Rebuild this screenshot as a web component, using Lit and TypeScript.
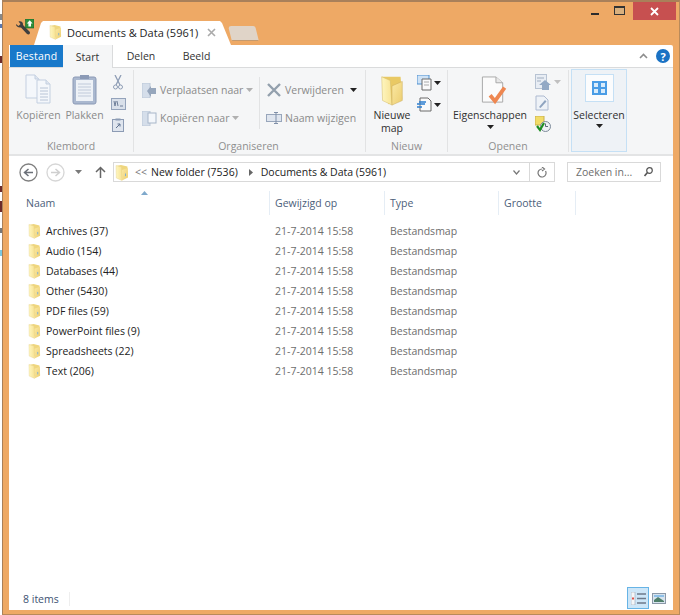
import { LitElement, css, html, svg } from 'lit';
import { customElement } from 'lit/decorators.js';

type Row = { name: string };

const rows: Row[] = [
  { name: 'Archives (37)' },
  { name: 'Audio (154)' },
  { name: 'Databases (44)' },
  { name: 'Other (5430)' },
  { name: 'PDF files (59)' },
  { name: 'PowerPoint files (9)' },
  { name: 'Spreadsheets (22)' },
  { name: 'Text (206)' },
];

// folder drawn in a 14x17 box, scaled by the caller
const folder = (w: number, h: number) => html`
  <svg class="ico" width=${w} height=${h} viewBox="0 0 14 17">
    <path d="M1 2 L6 1 L12.4 2.5 L12.8 13 L5 15 Z" fill="#efd67e"/>
    <path d="M1 1.5 L6.5 3 L7 16.5 L1.3 14 Z" fill="url(#fold)" stroke="#e6d28c" stroke-width=".4"/>
    <path d="M7 6 L12.8 4 L13 13.5 L7 16.5 Z" fill="url(#fold2)"/>
    <rect x="10" y="9.5" width="1" height="2.6" fill="#7fb0d2"/>
  </svg>`;

const caret = (c = '#222') => html`<svg class="ico" width="7" height="4" viewBox="0 0 7 4"><path d="M0 0 H7 L3.5 4 Z" fill=${c}/></svg>`;

const docs = svg`
  <path d="M1 1 H10 L14 5 V24 H1 Z" fill="#f4f7fb" stroke="#c3cfe0"/>
  <path d="M10 1 V5 H14" fill="#dfe6f0" stroke="#c3cfe0"/>`;

@customElement('app-root')
export class AppRoot extends LitElement {
  static styles = css`
    :host {
      display: block;
      width: 680px;
      height: 615px;
      overflow: hidden;
      font-family: "Open Sans", "Noto Sans", sans-serif;
      font-size: 10.5px;
      color: #1e1e1e;
      background: #fff;
    }
    .defs { position: absolute; width: 0; height: 0; }
    .ico { display: block; flex: none; }
    .desk {
      height: 615px;
      padding-left: 2px;
      box-sizing: border-box;
      /* bits of the desktop behind the window */
      background: linear-gradient(to bottom,
        #fff 0 14px, #888 14px 20px, #fff 20px 24px, #5a78b0 24px 28px, #fff 28px 56px,
        #6d2a2a 56px 63px, #fff 63px 186px, #6d2a2a 186px 192px, #fff 192px 201px,
        #6d2a2a 201px 212px, #fff 212px 228px, #777 228px 233px, #fff 233px 250px,
        #7cc8e0 250px 256px, #fff 256px);
    }
    .window {
      height: 615px;
      box-sizing: border-box;
      background: #eea965;
      border-left: 1px solid #a9805a;
      border-top: 2px solid #a9805a;
      border-right: 1px solid #b98a5a;
      border-bottom: 1px solid #b98a5a;
      padding: 0 6px 4px 6px;
      display: flex;
      flex-direction: column;
    }
    .titlebar {
      height: 43px;
      display: flex;
      align-items: flex-start;
      flex: none;
    }
    .app-ico { margin: 17px 0 0 6px; }
    .tab {
      margin-top: 19px;
      width: 197px;
      height: 24px;
      box-sizing: border-box;
      background: #fff;
      clip-path: polygon(0 100%, 7px 2px, 9px 0, 186px 0, 188px 2px, 197px 100%);
      display: flex;
      align-items: center;
      font-size: 11px;
      padding: 0 0 2px 15px;
      gap: 5px;
      white-space: nowrap;
    }
    .tab .x { margin-left: 4px; }
    .tab2 {
      margin: 24px 0 0 -1px;
      width: 27px;
      height: 14px;
      background: #e0d4c8;
      border-radius: 3px 2px 1px 1px;
      transform: skewX(14deg);
      border-bottom: 1px solid #c59a6e;
    }
    .winbtns {
      margin-left: auto;
      margin-right: -3px;
      display: flex;
      height: 18px;
    }
    .winbtn { width: 28px; display: flex; align-items: center; justify-content: center; }
    .winbtn.first { width: 20px; }
    .winbtn.close { width: 43px; background: #c75050; }
    .min { width: 8px; height: 2px; background: #2c2c2c; margin-top: 6px; }
    .max { width: 9px; height: 6px; border: 1px solid #333; border-top-width: 2px; background: #d9b07e; margin-top: -2px; }

    .content {
      flex: 1;
      background: #fff;
      display: flex;
      flex-direction: column;
      min-height: 0;
      border-top-right-radius: 2px;
    }
    .tabs {
      height: 23px;
      flex: none;
      display: flex;
      align-items: stretch;
      border-bottom: 1px solid #dadbdc;
      box-sizing: border-box;
    }
    .rtab { display: flex; align-items: center; justify-content: center; }
    .rtab.file { width: 53px; background: #1979ca; color: #fff; margin-left: 1px; letter-spacing: .2px; }
    .rtab.active { width: 49px; background: #f5f6f7; border-right: 1px solid #dadbdc; margin-bottom: -1px; color: #333; }
    .rtab.plain { width: 56px; color: #333; }
    .rtab.wide { width: 55px; }
    .tabs .right { margin-left: auto; display: flex; align-items: center; gap: 8px; padding-right: 3px; }
    .help {
      width: 14px; height: 14px; border-radius: 50%;
      background: #1a72c4; color: #fff; font-weight: 700; font-size: 11px;
      display: flex; align-items: center; justify-content: center;
    }

    .ribbon {
      height: 88px;
      flex: none;
      background: #f5f6f7;
      border-bottom: 2px solid #e3e4e5;
      display: flex;
      box-sizing: border-box;
      color: #8a8a8a;
    }
    .group {
      display: flex;
      flex-direction: column;
      align-items: stretch;
      box-sizing: border-box;
      padding-top: 2px;
    }
    .sep { width: 1px; background: #e2e3e4; margin: 2px 0; flex: none; }
    .sep.inner { margin: 7px 0 10px; }
    .g-body { height: 69px; display: flex; }
    .g-label { text-align: center; color: #8f8f8f; height: 15px; line-height: 14px; }
    .big {
      display: flex; flex-direction: column; align-items: center;
      line-height: 13px; text-align: center;
    }
    .col { display: flex; flex-direction: column; }
    .small { display: flex; align-items: center; gap: 3px; height: 28px; white-space: nowrap; }
    .dark { color: #303030; }
    .pair { display: flex; align-items: center; gap: 2px; }
    .sel {
      width: 56px;
      height: 83px;
      box-sizing: border-box;
      margin: 1px 0 0 2px;
      background: #eef2f6;
      border: 1px solid #c5e0f5;
      display: flex; flex-direction: column; align-items: center;
      color: #303030;
    }
    .sel-ico {
      width: 29px; height: 28px; margin-top: 4px; box-sizing: border-box;
      background: #fbfcfd; border: 1px solid #c5e0f5;
      display: flex; align-items: center; justify-content: center;
    }
    .sel-text { margin-top: 6px; line-height: 14px; }
    .sel-caret { margin-top: 2px; }

    .nav {
      height: 32px;
      flex: none;
      display: flex;
      align-items: center;
    }
    .back { margin-left: 10px; }
    .forward { margin-left: 8px; }
    .recent { margin-left: 10px; }
    .up { margin-left: 13px; }
    .addr {
      margin-left: 7px;
      width: 442px;
      height: 20px;
      box-sizing: border-box;
      border: 1px solid #d9d9d9;
      display: flex;
      align-items: center;
      color: #222;
      white-space: nowrap;
      padding-left: 1px;
    }
    .crumbs { margin-left: 6px; color: #777; }
    .crumb { margin-left: 4px; }
    .arrow { margin: 0 8px 0 11px; }
    .addr .drop { margin-left: auto; width: 25px; height: 100%; display: flex; align-items: center; justify-content: center; }
    .addr .ref { width: 24px; height: 100%; border-left: 1px solid #d9d9d9; display: flex; align-items: center; justify-content: center; }
    .search {
      margin-left: 12px;
      width: 94px;
      height: 20px;
      box-sizing: border-box;
      border: 1px solid #d9d9d9;
      display: flex;
      align-items: center;
      padding: 0 7px 0 8px;
      color: #6d6d6d;
      justify-content: space-between;
    }

    .list { flex: 1; display: flex; flex-direction: column; min-height: 0; position: relative; padding-top: 3px; }
    .head, .row {
      display: grid;
      grid-template-columns: 244px 115px 114px 77px;
      padding-left: 17px;
    }
    .head { height: 24px; color: #4c607a; align-items: center; flex: none; margin-bottom: 6px; }
    .head > div { box-sizing: border-box; height: 24px; line-height: 24px; border-right: 1px solid #e5edf5; padding-left: 5px; }
    .head > div:first-child { padding-left: 0; }
    .sort { position: absolute; left: 132px; top: 3px; }
    .row { height: 20px; align-items: center; color: #6d6d6d; }
    .row .name { display: flex; align-items: center; gap: 5px; color: #222; padding-left: 2px; }
    .row .cell { padding-left: 5px; }

    .status {
      margin-top: auto;
      height: 24px;
      flex: none;
      display: flex;
      align-items: center;
      padding: 1px 0 0 14px;
      box-sizing: border-box;
      color: #3c5272;
    }
    .status .views { margin-left: auto; margin-top: -1px; display: flex; align-items: center; gap: 3px; padding-right: 7px; }
    .status .st-sep { width: 1px; height: 14px; background: #eee; margin-left: 10px; }
    .view-on {
      width: 22px; height: 22px; box-sizing: border-box;
      background: #cde6f8; border: 1px solid #67b4e6;
      display: flex; align-items: center; justify-content: center;
    }
  `;

  render() {
    return html`
      <svg class="defs">
        <defs>
          <linearGradient id="fold" x1="0" x2="1" y1="0" y2="0">
            <stop offset="0" stop-color="#fef6c0"/><stop offset="1" stop-color="#f8e394"/>
          </linearGradient>
          <linearGradient id="fold2" x1="0" x2="1" y1="0" y2="1">
            <stop offset="0" stop-color="#fbe9a4"/><stop offset="1" stop-color="#eccd70"/>
          </linearGradient>
        </defs>
      </svg>
      <div class="desk">
        <div class="window">
          ${this.renderTitle()}
          <div class="content">
            ${this.renderTabs()}
            ${this.renderRibbon()}
            ${this.renderNav()}
            ${this.renderList()}
            ${this.renderStatus()}
          </div>
        </div>
      </div>
    `;
  }

  private renderTitle() {
    return html`
      <div class="titlebar">
        <svg class="ico app-ico" width="19" height="18" viewBox="0 0 19 18">
          <path d="M1 5 L3.5 7 L5.5 5 L3.5 2.5 C6 1.5 8.5 3.5 8 6 L14.5 12.5 C16 14 14 16.5 12 15 L6 8.5 C3.5 9 .8 7.5 1 5 Z" fill="#3f3f3f"/>
          <rect x="10.5" y="0" width="8.5" height="9" fill="#2f8f3a" stroke="#17602a" stroke-width=".6"/>
          <path d="M14.7 1.2 L17.6 4.4 H16 V7.6 H13.4 V4.4 H11.8 Z" fill="#fff"/>
        </svg>
        <div class="tab">
          ${folder(13, 16)}
          <span>Documents &amp; Data (5961)</span>
          <svg class="ico x" width="9" height="9" viewBox="0 0 9 9"><path d="M1 1 L8 8 M8 1 L1 8" stroke="#aaa" stroke-width="1.6"/></svg>
        </div>
        <div class="tab2"></div>
        <div class="winbtns">
          <div class="winbtn first"><div class="min"></div></div>
          <div class="winbtn"><div class="max"></div></div>
          <div class="winbtn close">
            <svg class="ico" width="9" height="9" viewBox="0 0 9 9"><path d="M1 1 L8 8 M8 1 L1 8" stroke="#fff" stroke-width="1.8"/></svg>
          </div>
        </div>
      </div>`;
  }

  private renderTabs() {
    return html`
      <div class="tabs">
        <div class="rtab file">Bestand</div>
        <div class="rtab active">Start</div>
        <div class="rtab plain">Delen</div>
        <div class="rtab plain wide">Beeld</div>
        <div class="right">
          <svg class="ico" width="9" height="6" viewBox="0 0 9 6"><path d="M1 5 L4.5 1.5 L8 5" fill="none" stroke="#8d8d8d" stroke-width="1.6"/></svg>
          <div class="help">?</div>
        </div>
      </div>`;
  }

  private renderRibbon() {
    return html`
      <div class="ribbon">
        <div class="group" style="width:124px">
          <div class="g-body">
            <div class="big" style="width:51px;padding-top:4px;margin-left:4px">
              <svg class="ico" width="28" height="31" viewBox="0 0 28 31" style="margin-bottom:4px">
                <g>${docs}</g>
                <g transform="translate(11,5)">${docs}<path d="M4 9 H12 M4 12 H12 M4 15 H12 M4 18 H12 M4 21 H12" stroke="#b8c4d6"/></g>
              </svg>
              Kopiëren
            </div>
            <div class="big" style="width:41px;padding-top:4px">
              <svg class="ico" width="25" height="31" viewBox="0 0 25 31" style="margin-bottom:4px">
                <rect x="1" y="3" width="23" height="27" rx="2" fill="#aab8cf" stroke="#8b9ab6"/>
                <rect x="4" y="6" width="17" height="21" fill="#eef2f7"/>
                <path d="M6 10 H19 M6 13 H19 M6 16 H19 M6 19 H19 M6 22 H19" stroke="#c0cada"/>
                <rect x="8" y="1" width="9" height="4" fill="#8b9ab6"/>
              </svg>
              Plakken
            </div>
            <div class="col" style="margin-left:8px;gap:8px;padding-top:5px">
              <svg class="ico" width="10" height="15" viewBox="0 0 10 15">
                <path d="M2 0 L7 10 M8 0 L3 10" stroke="#8e9db5" stroke-width="1.3"/>
                <circle cx="2.5" cy="12" r="2" fill="none" stroke="#8e9db5"/><circle cx="7.5" cy="12" r="2" fill="none" stroke="#8e9db5"/>
              </svg>
              <svg class="ico" style="margin-left:-2px" width="15" height="12" viewBox="0 0 15 12">
                <rect x=".5" y=".5" width="14" height="11" fill="#d9e0ea" stroke="#94a3bb"/>
                <path d="M3 3 L4 8 L5 3 M6 3 L7 8 M9 8 H12" stroke="#6f7f99" fill="none"/>
              </svg>
              <svg class="ico" style="margin-left:-1px" width="12" height="14" viewBox="0 0 12 14">
                <rect x=".5" y="1.5" width="11" height="12" fill="#dfe5ee" stroke="#8c9bb4"/>
                <rect x="3.5" y=".5" width="5" height="2" fill="#8c9bb4"/>
                <path d="M4 10 L8 6 M5.5 6 H8 V8.5" stroke="#5f7290" fill="none"/>
              </svg>
            </div>
          </div>
          <div class="g-label">Klembord</div>
        </div>
        <div class="sep"></div>
        <div class="group" style="width:229px">
          <div class="g-body">
            <div class="col" style="width:125px;padding:6px 0 0 8px;box-sizing:border-box">
              <div class="small">
                <svg class="ico" width="15" height="15" viewBox="0 0 15 15"><rect x="0" y="0" width="8" height="15" fill="#d5deea" stroke="#bcc8d8"/><path d="M14 5 V11 H9 V14 L5 8 L9 3 V5 Z" fill="#96a6bc"/></svg>
                <span>Verplaatsen naar</span>${caret('#b0b0b0')}
              </div>
              <div class="small">
                <svg class="ico" width="15" height="15" viewBox="0 0 15 15"><rect x="0" y="0" width="8" height="15" fill="#d5deea" stroke="#bcc8d8"/><rect x="6" y="2" width="8" height="10" fill="#f4f7fb" stroke="#a8b6c9"/></svg>
                <span>Kopiëren naar</span>${caret('#b0b0b0')}
              </div>
            </div>
            <div class="sep inner"></div>
            <div class="col" style="padding:6px 0 0 6px">
              <div class="small">
                <svg class="ico" style="margin:0 1px" width="14" height="14" viewBox="0 0 14 14"><path d="M1 1 L13 13 M13 1 L1 13" stroke="#93a0ad" stroke-width="2.4"/></svg>
                <span>Verwijderen</span><span style="margin-left:3px">${caret()}</span>
              </div>
              <div class="small">
                <svg class="ico" width="16" height="12" viewBox="0 0 16 12"><rect x=".5" y="2.5" width="15" height="7" fill="#dfe5ee" stroke="#98a6bb"/><path d="M10 0 V12 M8 .5 H12 M8 11.5 H12" stroke="#7f8fa8"/></svg>
                <span>Naam wijzigen</span>
              </div>
            </div>
          </div>
          <div class="g-label">Organiseren</div>
        </div>
        <div class="sep" style="margin-left:2px"></div>
        <div class="group" style="width:81px">
          <div class="g-body dark">
            <div class="big" style="width:50px;padding-top:5px;margin-left:1px">
              <svg class="ico" width="24" height="31" viewBox="0 0 14 17" preserveAspectRatio="none" style="margin-bottom:3px">
                <path d="M1 1 L12 1 L13 13 L5 16 Z" fill="#e9c964"/>
                <path d="M1 1 L6 3 L7 16.5 L1.5 14 Z" fill="url(#fold)" stroke="#d6bc6a" stroke-width=".3"/>
                <path d="M7 6 L13 3.5 L13 14 L7 16.5 Z" fill="url(#fold2)" stroke="#cdb060" stroke-width=".3"/>
              </svg>
              Nieuwe<br>map
            </div>
            <div class="col" style="margin-top:5px;gap:6px">
              <div class="pair">
                <svg class="ico" width="15" height="16" viewBox="0 0 15 16"><rect x="0" y="0" width="12" height="9" fill="#cfe3f6" stroke="#4f90cf"/><path d="M5 4 H14 V15 H5 Z" fill="#fafafa" stroke="#6a6a6a"/><path d="M7 7 H12 M7 10 H12" stroke="#aaa"/></svg>
                ${caret()}
              </div>
              <div class="pair">
                <svg class="ico" width="15" height="15" viewBox="0 0 15 15"><path d="M3 1 H11 L14 4 V14 H3 Z" fill="#fafafa" stroke="#6a6a6a"/><path d="M0 7 H8 M2 5 H9 M0 10 H5" stroke="#2e7fd0" stroke-width="1.5"/></svg>
                ${caret()}
              </div>
            </div>
          </div>
          <div class="g-label">Nieuw</div>
        </div>
        <div class="sep"></div>
        <div class="group" style="width:120px">
          <div class="g-body dark">
            <div class="big" style="width:78px;padding-top:6px;margin-left:3px">
              <svg class="ico" width="26" height="29" viewBox="0 0 26 30" style="margin:0 0 4px 8px">
                <path d="M1 1 H15 L22 7 V27 H1 Z" fill="#fbfbfb" stroke="#a8a8a8"/>
                <path d="M15 1 V7 H22" fill="#e8e8e8" stroke="#a8a8a8"/>
                <path d="M9 20 L14 26 L24 12" fill="none" stroke="#ee8751" stroke-width="4"/>
              </svg>
              Eigenschappen
              <div style="margin-top:3px">${caret()}</div>
            </div>
            <div class="col" style="margin-left:6px;gap:5px;padding-top:4px">
              <div class="pair" style="gap:3px">
                <svg class="ico" width="16" height="16" viewBox="0 0 16 16"><rect x=".5" y=".5" width="11" height="14" fill="#e8edf4" stroke="#b7c3d3"/><path d="M2 4 H9 M2 7 H6" stroke="#a0aec0"/><path d="M10 6 L16 11 H14 V16 H7 V11 H4 Z" fill="#93a9c5"/></svg>
                ${caret('#c0c0c0')}
              </div>
              <svg class="ico" width="14" height="16" viewBox="0 0 14 16"><path d="M1 1 H9 L13 5 V15 H1 Z" fill="#eef2f7" stroke="#adbad0"/><path d="M4 12 L10 5 L11.5 6.5 L5.5 13 Z" fill="#8ea3bf"/></svg>
              <svg class="ico" width="16" height="16" viewBox="0 0 16 16">
                <rect x="0" y="0" width="9" height="9" fill="#f2dc68" stroke="#c9b04e"/>
                <circle cx="10.5" cy="10.5" r="5" fill="#eef1f5" stroke="#7d8b9a"/>
                <path d="M10.5 7.5 V10.5 H13" stroke="#59677a" fill="none"/>
                <path d="M2 10 L5 14 L9 7" stroke="#1d8e22" stroke-width="2.2" fill="none"/>
              </svg>
            </div>
          </div>
          <div class="g-label">Openen</div>
        </div>
        <div class="sep"></div>
        <div class="sel">
          <div class="sel-ico">
            <svg class="ico" width="15" height="14" viewBox="0 0 15 14">
              <rect width="15" height="14" fill="#4a9de6"/>
              <rect x="2" y="2" width="4" height="4" fill="#d9ecfb"/><rect x="9" y="2" width="4" height="4" fill="#d9ecfb"/>
              <rect x="2" y="8" width="4" height="4" fill="#d9ecfb"/><rect x="9" y="8" width="4" height="4" fill="#d9ecfb"/>
            </svg>
          </div>
          <div class="sel-text">Selecteren</div>
          <div class="sel-caret">${caret()}</div>
        </div>
      </div>`;
  }

  private renderNav() {
    return html`
      <div class="nav">
        <svg class="ico back" width="19" height="19" viewBox="0 0 19 19">
          <circle cx="9.5" cy="9.5" r="8.5" fill="#fff" stroke="#7f7f7f" stroke-width="1.3"/>
          <path d="M14 9.5 H6 M9.5 6 L5.5 9.5 L9.5 13" fill="none" stroke="#6b7078" stroke-width="1.5"/>
        </svg>
        <svg class="ico forward" width="19" height="19" viewBox="0 0 19 19">
          <circle cx="9.5" cy="9.5" r="8.5" fill="#fff" stroke="#d6d6d6" stroke-width="1.3"/>
          <path d="M5 9.5 H13 M9.5 6 L13.5 9.5 L9.5 13" fill="none" stroke="#cfcfcf" stroke-width="1.5"/>
        </svg>
        <svg class="ico recent" width="7" height="4" viewBox="0 0 7 4"><path d="M0 0 H7 L3.5 4 Z" fill="#7a7a7a"/></svg>
        <svg class="ico up" width="11" height="12" viewBox="0 0 11 12"><path d="M5.5 12 V1.5 M1 6 L5.5 1.5 L10 6" fill="none" stroke="#666" stroke-width="1.5"/></svg>
        <div class="addr">
          ${folder(14, 17)}
          <span class="crumbs">&lt;&lt;</span>
          <span class="crumb">New folder (7536)</span>
          <svg class="ico arrow" width="4" height="7" viewBox="0 0 4 7"><path d="M0 0 L4 3.5 L0 7 Z" fill="#666"/></svg>
          <span>Documents &amp; Data (5961)</span>
          <div class="drop"><svg class="ico" width="7" height="5" viewBox="0 0 7 5"><path d="M.5 .5 L3.5 4 L6.5 .5" fill="none" stroke="#777" stroke-width="1.2"/></svg></div>
          <div class="ref"><svg class="ico" width="10" height="11" viewBox="0 0 10 11"><path d="M8.5 4 A4 4 0 1 1 5 2 M5 0 L7.5 2 L5 4" fill="none" stroke="#777" stroke-width="1.2"/></svg></div>
        </div>
        <div class="search">
          <span>Zoeken in...</span>
          <svg class="ico" width="9" height="10" viewBox="0 0 9 10"><circle cx="5.5" cy="3.5" r="2.8" fill="none" stroke="#555" stroke-width="1.2"/><path d="M3.5 5.5 L.5 9" stroke="#555" stroke-width="1.6"/></svg>
        </div>
      </div>`;
  }

  private renderList() {
    return html`
      <div class="list">
        <svg class="ico sort" width="7" height="4" viewBox="0 0 7 4"><path d="M0 4 L3.5 0 L7 4 Z" fill="#7fa9cc"/></svg>
        <div class="head">
          <div>Naam</div><div>Gewijzigd op</div><div>Type</div><div>Grootte</div>
        </div>
        ${rows.map(r => html`
          <div class="row">
            <div class="name">${folder(13, 16)}<span>${r.name}</span></div>
            <div class="cell">21-7-2014 15:58</div>
            <div class="cell">Bestandsmap</div>
          </div>`)}
      </div>`;
  }

  private renderStatus() {
    return html`
      <div class="status">
        <span>8 items</span>
        <div class="st-sep"></div>
        <div class="views">
          <div class="view-on">
            <svg class="ico" width="15" height="13" viewBox="0 0 15 13">
              <rect x="0" y="0" width="4" height="13" fill="#f4f6f8" stroke="#9aa6b4" stroke-width=".6"/>
              <rect x="1" y="5.5" width="2" height="2" fill="#e0524a"/>
              <path d="M6 2 H15 M6 6.5 H15 M6 11 H15" stroke="#6d7a8a" stroke-width="1.4"/>
            </svg>
          </div>
          <svg class="ico" width="14" height="11" viewBox="0 0 14 11">
            <rect x=".5" y=".5" width="13" height="10" fill="#d8e4ee" stroke="#8b98a8"/>
            <path d="M2 7 L6 4 L12 8 V9 H2 Z" fill="#4f7f6a"/><rect x="2" y="2" width="10" height="2" fill="#8fc0e8"/>
          </svg>
        </div>
      </div>`;
  }
}
